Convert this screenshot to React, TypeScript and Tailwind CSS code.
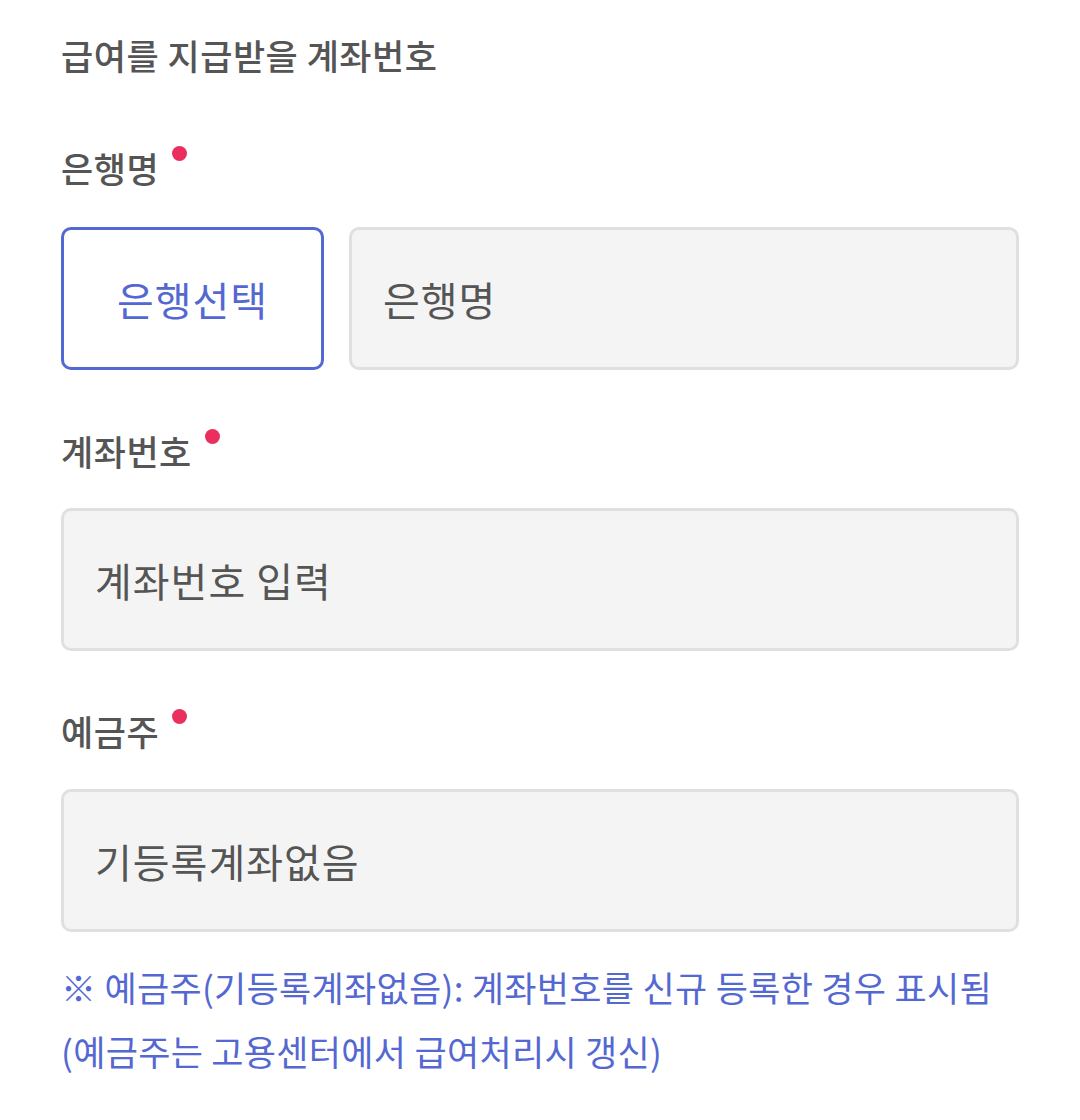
import React from "react";

const font = { fontFamily: '"Noto Sans CJK KR", "Noto Sans", sans-serif' };

function Label({ text }: { text: string }) {
  return (
    <div className="flex items-start h-[48px]">
      <span className="text-[35px] leading-[48px] font-medium tracking-[0.5px] text-[#555555]">{text}</span>
      <span className="ml-[13px] mt-[2px] w-[15px] h-[15px] rounded-full bg-[#ea2f5f]" />
    </div>
  );
}

function Field({ text }: { text: string }) {
  return (
    <div className="h-[143px] rounded-[10px] border-[3px] border-[#e0e0e0] bg-[#f4f4f4] flex items-center pl-[31px]">
      <span className="text-[40px] tracking-[1px] text-[#555555]">{text}</span>
    </div>
  );
}

export default function App() {
  return (
    <div className="w-[1080px] h-[1120px] bg-white px-[61px] pt-[31px]" style={font}>
      <div className="h-[48px] text-[35px] leading-[48px] font-medium tracking-[0.5px] text-[#555555]">급여를 지급받을 계좌번호</div>

      <div className="mt-[65px]">
        <Label text="은행명" />
      </div>
      <div className="mt-[35px] flex gap-[25px]">
        <button className="w-[263px] h-[143px] rounded-[10px] border-[3px] border-[#5468d2] bg-white flex items-center justify-center">
          <span className="text-[40px] tracking-[1px] text-[#5468d2]">은행선택</span>
        </button>
        <div className="flex-1">
          <Field text="은행명" />
        </div>
      </div>

      <div className="mt-[57px]">
        <Label text="계좌번호" />
      </div>
      <div className="mt-[33px]">
        <Field text="계좌번호 입력" />
      </div>

      <div className="mt-[56px]">
        <Label text="예금주" />
      </div>
      <div className="mt-[34px]">
        <Field text="기등록계좌없음" />
      </div>

      <div className="mt-[23px] text-[35px] leading-[64px] tracking-[0.3px] text-[#5468d2]">
        <div>※ 예금주(기등록계좌없음): 계좌번호를 신규 등록한 경우 표시됨</div>
        <div>(예금주는 고용센터에서 급여처리시 갱신)</div>
      </div>
    </div>
  );
}
